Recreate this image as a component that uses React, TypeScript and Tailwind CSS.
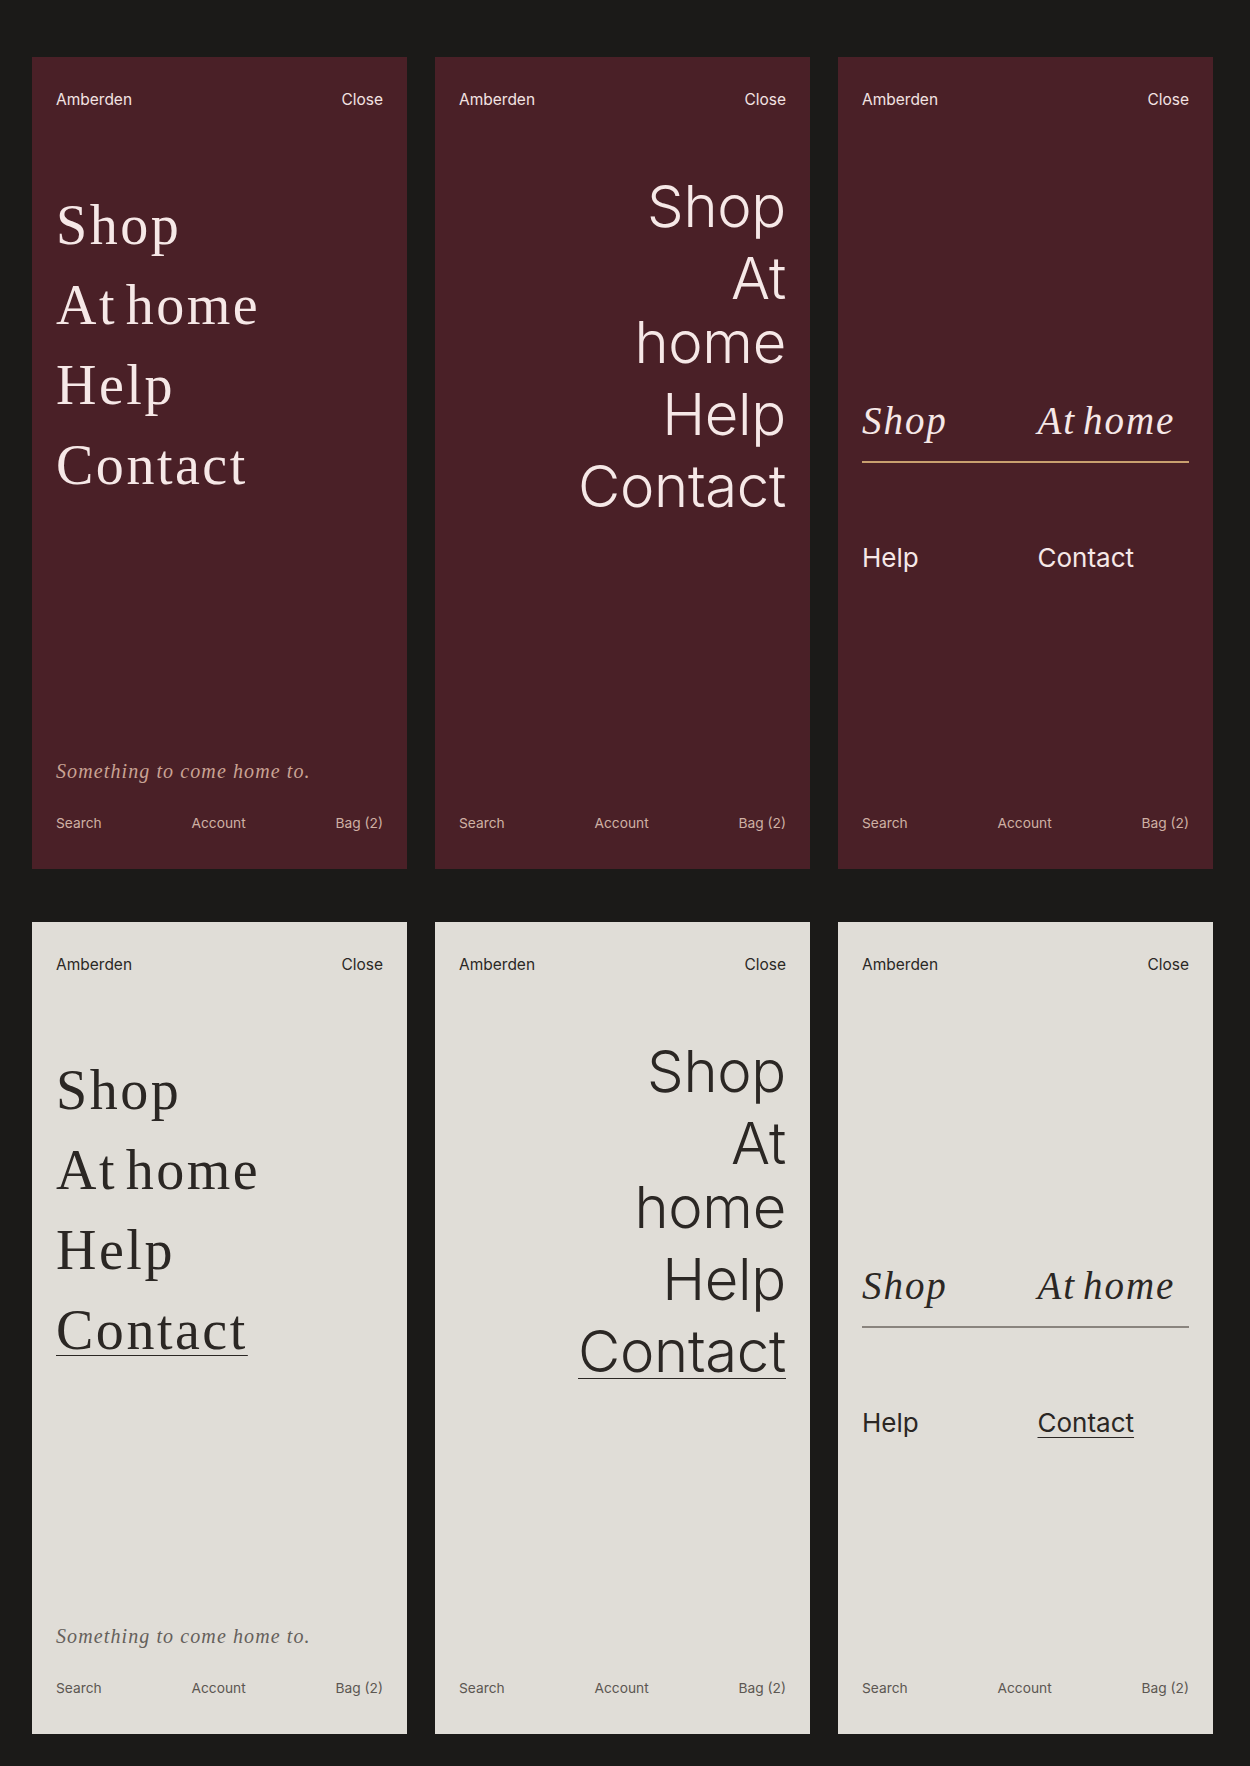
import React from "react";

type Theme = "dark" | "light";
type Layout = "stack" | "right" | "grid";

const serif = "font-['Liberation_Serif',_'Times_New_Roman',_serif]";
const sans = "font-['Inter',_'Liberation_Sans',_sans-serif]";

const themes = {
  dark: {
    panel: "bg-[#4a2027]",
    header: "text-[#f3e3e2]",
    nav: "text-[#f6e8e7]",
    tagline: "text-[#c9a394]",
    footer: "text-[#cfb0a4]",
    rule: "bg-[#c9a06f]",
  },
  light: {
    panel: "bg-[#e0ddd7]",
    header: "text-[#2b2825]",
    nav: "text-[#2b2724]",
    tagline: "text-[#65605b]",
    footer: "text-[#5c5752]",
    rule: "bg-[#8a847e]",
  },
};

const items = ["Shop", "At home", "Help", "Contact"];

const StackNav = ({ theme }: { theme: Theme }) => (
  <nav className={`mt-[75px] flex flex-col ${serif} ${themes[theme].nav}`}>
    {items.map((item) => (
      <span
        key={item}
        className={`text-[56px] leading-[80px] tracking-[0.045em] [word-spacing:-0.14em] ${
          theme === "light" && item === "Contact"
            ? "self-start underline decoration-1 underline-offset-[6px]"
            : ""
        }`}
      >
        {item}
      </span>
    ))}
  </nav>
);

const RightNav = ({ theme }: { theme: Theme }) => (
  <nav
    className={`mt-[64px] flex flex-col items-end gap-2 ${sans} ${themes[theme].nav}`}
  >
    {items.map((item) => (
      <span
        key={item}
        className={`w-min text-right text-[58px] font-light leading-[64px] tracking-[-0.005em] ${
          theme === "light" && item === "Contact"
            ? "underline decoration-1 underline-offset-[6px]"
            : ""
        }`}
      >
        {item}
      </span>
    ))}
  </nav>
);

const GridNav = ({ theme }: { theme: Theme }) => {
  const t = themes[theme];
  return (
    <nav className={`mt-[287px] grid grid-cols-2 gap-x-6 ${t.nav}`}>
      <span className={`${serif} pb-4 text-[39px] italic leading-[48px] tracking-[0.05em]`}>
        Shop
      </span>
      <span
        className={`${serif} pb-4 text-[39px] italic leading-[48px] tracking-[0.05em] [word-spacing:-0.12em]`}
      >
        At home
      </span>
      <div className={`col-span-2 h-[1.5px] ${t.rule}`} />
      <span className={`${sans} mt-[77px] text-[26px] leading-[36px]`}>Help</span>
      <span className={`${sans} mt-[77px] text-[26px] leading-[36px]`}>
        <span
          className={
            theme === "light"
              ? "underline decoration-1 underline-offset-[5px]"
              : ""
          }
        >
          Contact
        </span>
      </span>
    </nav>
  );
};

const Panel = ({ theme, layout }: { theme: Theme; layout: Layout }) => {
  const t = themes[theme];
  return (
    <section className={`flex h-[812px] flex-col px-6 pb-9 pt-[33px] ${t.panel}`}>
      <header
        className={`flex items-center justify-between text-[15.5px] leading-5 ${sans} ${t.header}`}
      >
        <span>Amberden</span>
        <span>Close</span>
      </header>

      {layout === "stack" && <StackNav theme={theme} />}
      {layout === "right" && <RightNav theme={theme} />}
      {layout === "grid" && <GridNav theme={theme} />}

      <div className="mt-auto">
        {layout === "stack" && (
          <p
            className={`mb-7 text-[20px] italic leading-7 tracking-[0.055em] ${serif} ${t.tagline}`}
          >
            Something to come home to.
          </p>
        )}
        <div
          className={`flex items-center justify-between text-[13.75px] leading-5 ${sans} ${t.footer}`}
        >
          <span>Search</span>
          <span>Account</span>
          <span>Bag (2)</span>
        </div>
      </div>
    </section>
  );
};

export default function App() {
  const layouts: Layout[] = ["stack", "right", "grid"];
  const rows: Theme[] = ["dark", "light"];
  return (
    <div className="min-h-screen bg-[#1b1a18] pb-8 pl-8 pt-[57px]">
      <div className="grid grid-cols-[repeat(3,375px)] gap-x-7 gap-y-[53px]">
        {rows.map((theme) =>
          layouts.map((layout) => (
            <Panel key={`${theme}-${layout}`} theme={theme} layout={layout} />
          ))
        )}
      </div>
    </div>
  );
}
